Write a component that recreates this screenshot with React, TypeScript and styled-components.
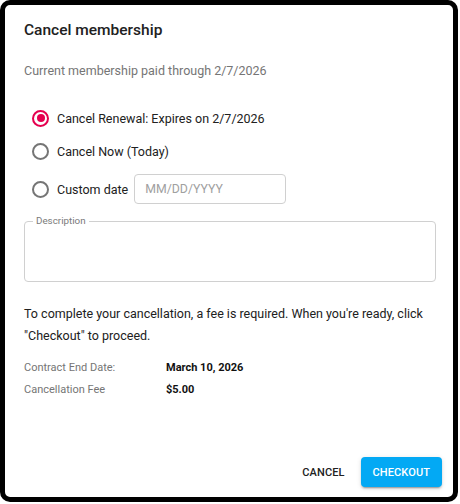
import React from "react";
import styled, { createGlobalStyle } from "styled-components";

const Global = createGlobalStyle`
  html, body { margin: 0; padding: 0; background: #ffffff; }
  body { font-family: Roboto, "Liberation Sans", Arial, sans-serif; }
  * { box-sizing: border-box; }
`;

const Frame = styled.div`
  width: 458px;
  height: 502px;
  border: 5px solid #000;
  border-radius: 10px;
  background: #fff;
  display: flex;
  flex-direction: column;
  padding: 13px 17px 10px 19px;
`;

const Title = styled.h2`
  margin: 0;
  font-size: 15.5px;
  line-height: 24px;
  font-weight: 500;
  color: #212121;
`;

const Subtitle = styled.p`
  margin: 19px 0 0;
  font-size: 12.5px;
  line-height: 20px;
  color: #757575;
`;

const Options = styled.div`
  margin-top: 25px;
  display: flex;
  flex-direction: column;
`;

const OptionRow = styled.label<{ $gap: number; $height: number }>`
  display: flex;
  align-items: center;
  height: ${(p) => p.$height}px;
  margin-top: ${(p) => p.$gap}px;
  padding-left: 8px;
  font-size: 12.5px;
  color: #212121;
  cursor: pointer;
`;

const RadioCircle = styled.span<{ $checked?: boolean }>`
  width: 17px;
  height: 17px;
  border-radius: 50%;
  border: 2px solid ${(p) => (p.$checked ? "#e5004f" : "#757575")};
  display: flex;
  align-items: center;
  justify-content: center;
  flex-shrink: 0;
  margin-right: 8px;
  &::after {
    content: "";
    width: 8px;
    height: 8px;
    border-radius: 50%;
    background: ${(p) => (p.$checked ? "#e5004f" : "transparent")};
  }
`;

const DateInput = styled.input`
  margin-left: 6px;
  width: 152px;
  height: 30px;
  border: 1px solid #d0d0d0;
  border-radius: 4px;
  padding: 0 10px;
  font-family: Roboto, "Liberation Sans", Arial, sans-serif;
  font-size: 12.3px;
  color: #212121;
  outline: none;
  &::placeholder { color: #a0a0a0; }
`;

const Field = styled.fieldset`
  margin: 11px 0 0;
  padding: 0 8px;
  border: 1px solid #d0d0d0;
  border-radius: 4px;
  height: 67px;
  min-width: 0;
`;

const Legend = styled.legend`
  padding: 0 3px;
  font-size: 9.8px;
  line-height: 12px;
  color: #7a7a7a;
`;

const Notice = styled.p`
  margin: 21px 0 0;
  font-size: 12.5px;
  line-height: 22px;
  color: #212121;
`;

const InfoList = styled.div`
  margin-top: 10px;
  display: grid;
  grid-template-columns: 142px 1fr;
  font-size: 11px;
  line-height: 22px;
`;

const InfoLabel = styled.span`
  color: #757575;
`;

const InfoValue = styled.span`
  color: #111;
  font-weight: 700;
`;

const Footer = styled.div`
  margin-top: auto;
  display: flex;
  justify-content: flex-end;
  align-items: center;
  gap: 4px;
  margin-right: -6px;
`;

const Button = styled.button<{ $primary?: boolean }>`
  height: 30px;
  border: none;
  border-radius: 4px;
  padding: 0 12px;
  font-family: Roboto, "Liberation Sans", Arial, sans-serif;
  font-size: 11px;
  font-weight: 500;
  text-transform: uppercase;
  letter-spacing: 0.1px;
  cursor: pointer;
  background: ${(p) => (p.$primary ? "#03a9f4" : "transparent")};
  color: ${(p) => (p.$primary ? "#fff" : "#212121")};
  box-shadow: ${(p) =>
    p.$primary
      ? "0 3px 1px -2px rgba(0,0,0,0.2), 0 2px 2px 0 rgba(0,0,0,0.14), 0 1px 5px 0 rgba(0,0,0,0.12)"
      : "none"};
`;

export default function App() {
  return (
    <>
      <Global />
      <Frame>
        <Title>Cancel membership</Title>
        <Subtitle>Current membership paid through 2/7/2026</Subtitle>
        <Options>
          <OptionRow $gap={0} $height={24}>
            <RadioCircle $checked />
            Cancel Renewal: Expires on 2/7/2026
          </OptionRow>
          <OptionRow $gap={9} $height={24}>
            <RadioCircle />
            Cancel Now (Today)
          </OptionRow>
          <OptionRow $gap={11} $height={30}>
            <RadioCircle />
            Custom date
            <DateInput placeholder="MM/DD/YYYY" />
          </OptionRow>
        </Options>
        <Field>
          <Legend>Description</Legend>
        </Field>
        <Notice>
          To complete your cancellation, a fee is required. When you're ready, click "Checkout" to proceed.
        </Notice>
        <InfoList>
          <InfoLabel>Contract End Date:</InfoLabel>
          <InfoValue>March 10, 2026</InfoValue>
          <InfoLabel>Cancellation Fee</InfoLabel>
          <InfoValue>$5.00</InfoValue>
        </InfoList>
        <Footer>
          <Button>Cancel</Button>
          <Button $primary>Checkout</Button>
        </Footer>
      </Frame>
    </>
  );
}
